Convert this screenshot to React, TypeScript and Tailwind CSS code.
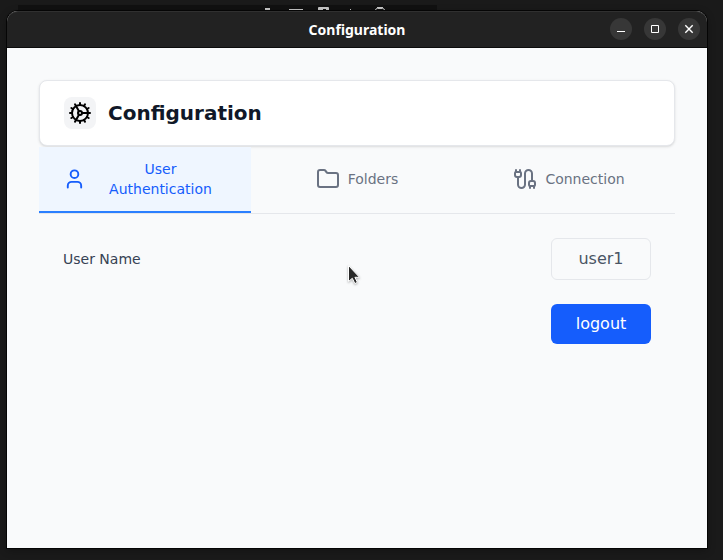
import { Cable, Cog, Folder, User } from 'lucide-react';

const tabBase =
  'flex flex-1 basis-0 min-w-0 items-center justify-center gap-2 px-6 py-3 border-b-2 text-sm font-medium';

function TitleBar() {
  const control = 'flex size-[22px] items-center justify-center rounded-full bg-[#373737]';
  return (
    <header className="relative flex h-[37px] items-start justify-end gap-3 rounded-t-[11px] border-t border-b border-t-[#303030] border-b-[#0c0c0c] bg-[#222222] pt-[6px] pr-[7px]">
      <h1 className="absolute inset-x-0 top-[8px] text-center font-['Noto_Sans',sans-serif] text-[14px] leading-5 font-bold text-white">
        Configuration
      </h1>
      <button className={control} aria-label="Minimize">
        <svg width="22" height="22" viewBox="0 0 22 22"><path d="M7 13.5h8" stroke="#fff" /></svg>
      </button>
      <button className={control} aria-label="Maximize">
        <svg width="22" height="22" viewBox="0 0 22 22"><path d="M7.5 7.5h7v7h-7z" stroke="#fff" fill="none" /></svg>
      </button>
      <button className={control} aria-label="Close">
        <svg width="22" height="22" viewBox="0 0 22 22"><path d="M7.3 7.3l7.4 7.4M14.7 7.3l-7.4 7.4" stroke="#fff" strokeWidth="1.4" /></svg>
      </button>
    </header>
  );
}

export default function App() {
  return (
    <div className="relative h-[560px] w-[723px] overflow-hidden bg-[#1a1a1a] px-[7px] pt-[11px] font-['DejaVu_Sans',sans-serif]">
      <div className="absolute top-[5px] left-[18px] h-[6px] w-[419px] bg-[#111111]">
        <svg width="419" height="6" viewBox="0 0 419 6" fill="#c8c8c8">
          <path d="M247 3h5v3h-5zM271 4h14v1h-14zM300 3q0-1 1-1h9q1 0 1 1v3h-3v-2h-3v2h-5zM332 4h1v2h-1z" />
          <path d="M357.5 5q0-1.5 2-1.5h5q2 0 2 1.5M359 2.5h6" stroke="#c8c8c8" fill="none" />
        </svg>
      </div>
      <div className="relative h-[537px] w-[700px] rounded-t-[11px] bg-gray-50 shadow-[0_0_0_1px_#050505,0_2px_8px_rgba(0,0,0,0.3)]">
        <TitleBar />
        <main className="px-8 pt-8">
          <div className="mb-px flex h-[66px] items-center gap-3 rounded-lg border border-gray-200 bg-white px-6 shadow-sm">
            <div className="flex size-8 items-center justify-center rounded-lg bg-gray-100">
              <Cog size={24} className="text-black" />
            </div>
            <h2 className="text-xl leading-7 font-bold text-gray-900">Configuration</h2>
          </div>
          <nav className="relative flex border-b border-gray-200">
            <button className={`${tabBase} border-blue-500 bg-blue-50 text-blue-600`}>
              <User size={24} />
              <span>User Authentication</span>
            </button>
            <button className={`${tabBase} border-transparent text-gray-500`}>
              <Folder size={24} />
              <span>Folders</span>
            </button>
            <button className={`${tabBase} border-transparent text-gray-500`}>
              <Cable size={24} />
              <span>Connection</span>
            </button>
          </nav>
          <section className="flex flex-col gap-6 p-6">
            <div className="flex items-center justify-between">
              <span className="text-sm font-medium text-gray-700">User Name</span>
              <div className="flex h-[42px] w-[100px] items-center justify-center rounded-md border border-gray-200 text-base text-gray-600">
                user1
              </div>
            </div>
            <button className="h-10 w-[100px] self-end rounded-md bg-blue-600 pb-px text-base font-medium text-white">
              logout
            </button>
          </section>
        </main>
      </div>
      <svg className="absolute top-[263px] left-[345px] drop-shadow-[0_1px_1px_rgba(0,0,0,0.3)]" width="16" height="24" viewBox="0 0 16 24">
        <path d="M3.5 2.5v16l3.8-3.2 2.6 5.3 2.5-1.3-2.5-5h4.6z" fill="#292929" stroke="#fff" strokeWidth="1" />
      </svg>
    </div>
  );
}
